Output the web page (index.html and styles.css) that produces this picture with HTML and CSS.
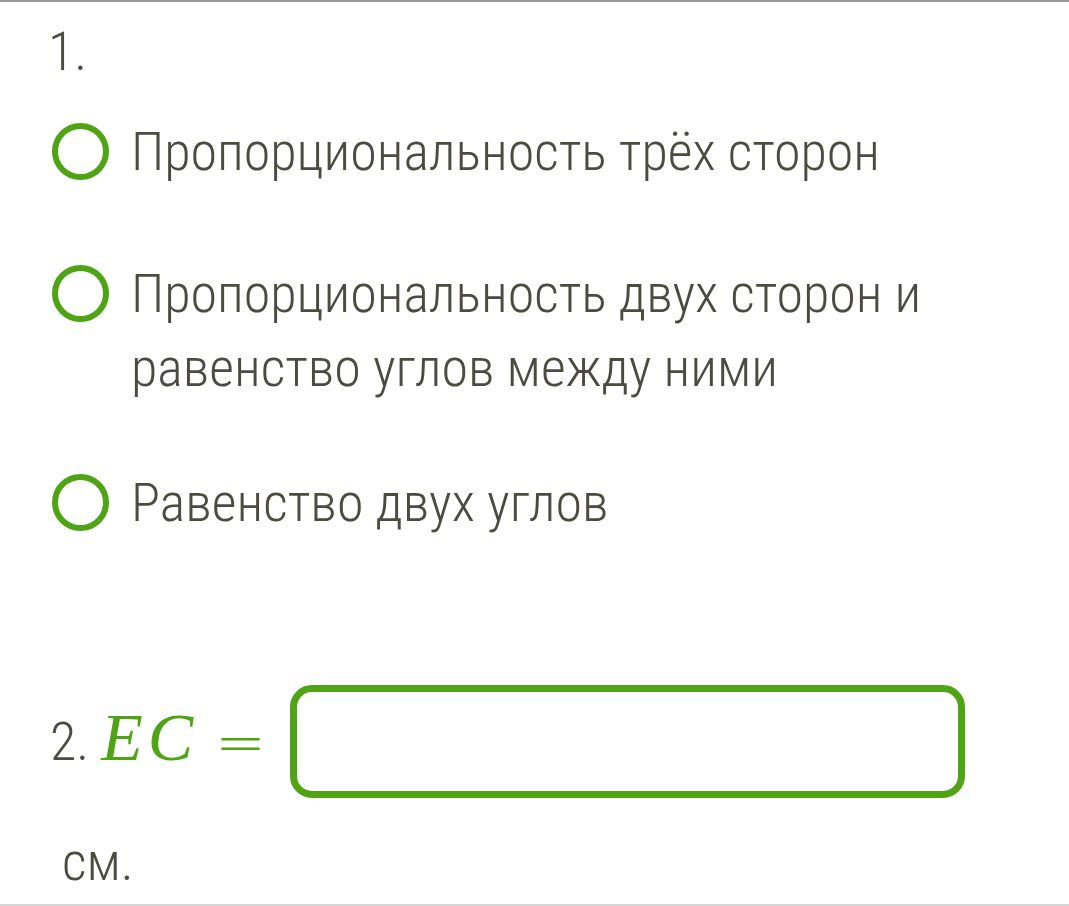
FILE: index.html
```html
<!DOCTYPE html>
<html lang="ru">
<head>
<meta charset="utf-8">
<link rel="stylesheet" href="styles.css">
</head>
<body>
<div class="page">
  <div class="num">1.</div>
  <div class="options">
    <div class="option"><span class="radio"></span><span class="label">Пропорциональность трёх сторон</span></div>
    <div class="option"><span class="radio"></span><span class="label">Пропорциональность двух сторон и равенство углов между ними</span></div>
    <div class="option option-last"><span class="radio"></span><span class="label">Равенство двух углов</span></div>
  </div>
  <div class="q2">
    <span class="num2">2.</span>
    <span class="math">EC</span>
    <span class="eq">=</span>
    <span class="input"></span>
  </div>
  <div class="unit">см.</div>
</div>
</body>
</html>
```
FILE: styles.css
```css
html, body { margin: 0; padding: 0; background: #fff; }
body { width: 1069px; height: 906px; overflow: hidden; font-family: Roboto, "Noto Sans", sans-serif; font-weight: 300; font-stretch: condensed; color: #4b4b41; }
.page { box-sizing: border-box; height: 906px; border-top: 2px solid #999; border-bottom: 2px solid #d6d6d6; padding: 20px 0 0 50px; }
.num { font-size: 54px; line-height: 60px; margin-left: -2px; }
.options { display: flex; flex-direction: column; gap: 68px; margin-top: 33px; }
.option { display: flex; align-items: flex-start; }
.option-last { margin-top: -7px; }
.radio { flex: none; box-sizing: border-box; width: 57px; height: 57px; border: 6px solid #4ea414; border-radius: 50%; margin: 8px 22px 0 2px; }
.label { font-size: 54px; line-height: 74px; width: 820px; }
.q2 { display: flex; align-items: center; margin-top: 145px; }
.num2 { font-size: 54px; line-height: 60px; }
.math { font-family: "Liberation Serif", serif; font-style: italic; font-size: 68px; line-height: 68px; letter-spacing: 5px; color: #4ea414; margin: 0 0 10px 12px; }
.eq { font-family: "DejaVu Sans", sans-serif; font-size: 61px; line-height: 61px; color: #4ea414; margin-left: 17px; }
.input { box-sizing: border-box; width: 675px; height: 113px; border: 7px solid #4ea414; border-radius: 22px; margin-left: 24px; }
.unit { font-size: 54px; line-height: 60px; margin: 34px 0 0 12px; }
```
